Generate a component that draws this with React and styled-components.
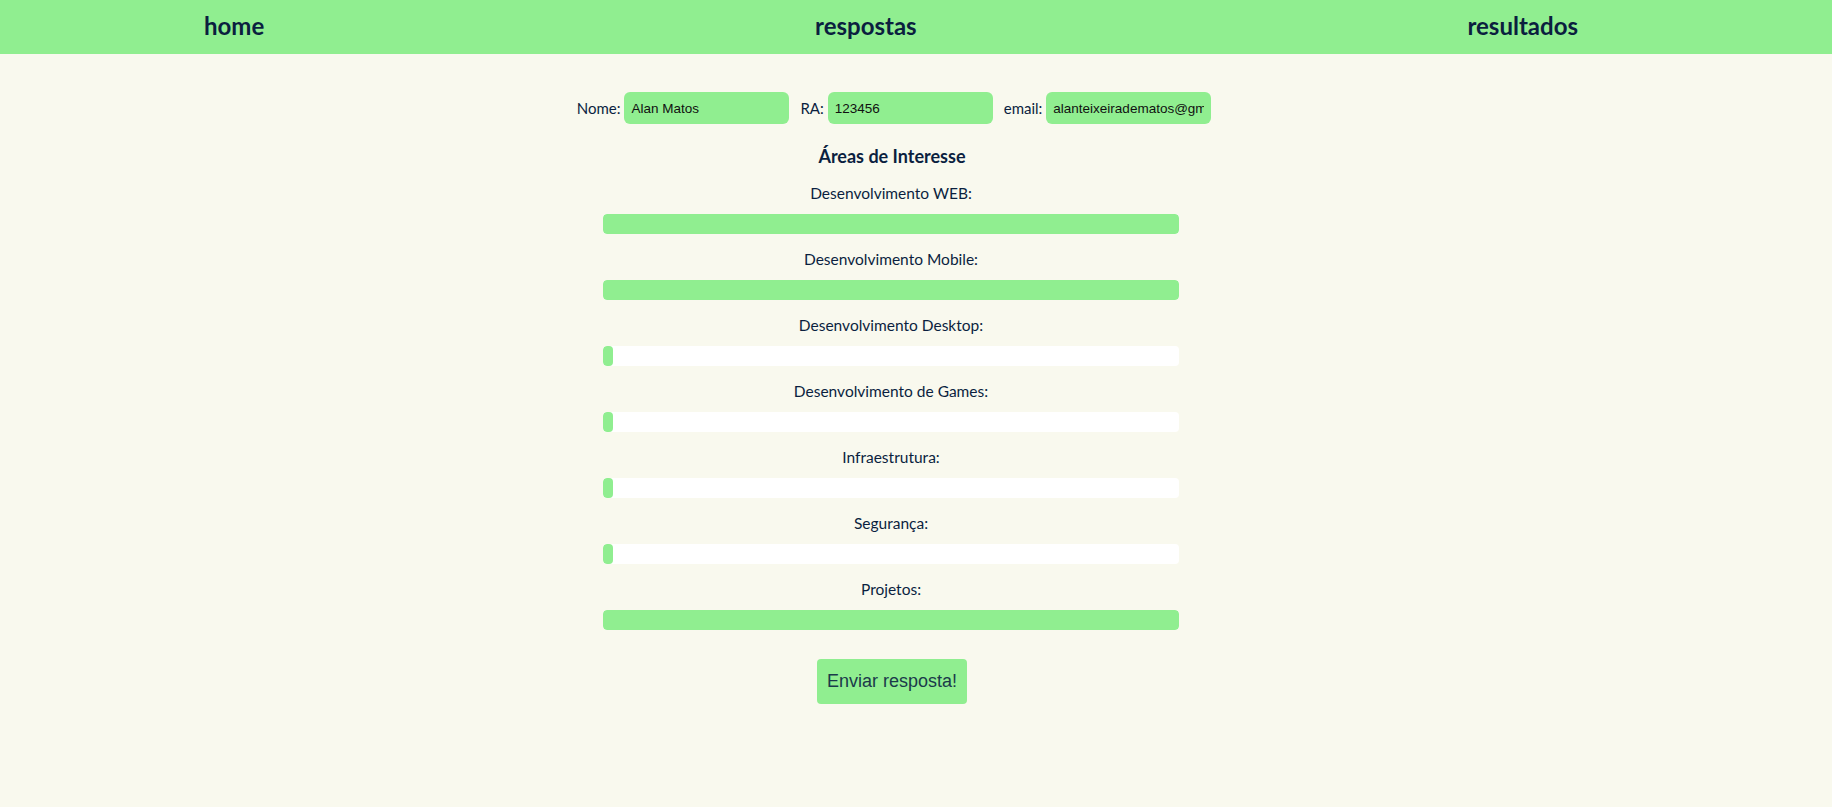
import React from "react";
import styled, { createGlobalStyle } from "styled-components";

const Global = createGlobalStyle`
  html, body { margin: 0; padding: 0; }
  body {
    background: #f9f9ee;
    font-family: Lato, "Open Sans", sans-serif;
    color: #0b1f3f;
  }
`;

const Header = styled.nav`
  height: 54px;
  background: #90ee90;
  display: flex;
  align-items: center;
  justify-content: space-between;
  padding: 0 254px 0 204px;
`;

const NavLink = styled.a`
  font-family: Lato, sans-serif;
  font-weight: 700;
  font-size: 24px;
  color: #0b1f3f;
  text-decoration: none;
  line-height: 1;
  margin-top: -3px;
`;

const Main = styled.main`
  display: flex;
  flex-direction: column;
  align-items: center;
  padding: 38px 48px 0 0;
`;

const FormRow = styled.div`
  display: flex;
  align-items: center;
  gap: 11px;
  margin-left: 4px;
`;

const Field = styled.label`
  display: flex;
  align-items: center;
  gap: 4px;
  font-size: 15px;
  color: #0b1f3f;
`;

const TextInput = styled.input`
  width: 165px;
  height: 32px;
  box-sizing: border-box;
  border: none;
  border-radius: 6px;
  background: #90ee90;
  padding: 0 7px;
  font-family: "Liberation Sans", Arial, sans-serif;
  font-size: 13.5px;
  color: #111;
  outline: none;
`;

const Title = styled.h2`
  margin: 21px 0 0;
  font-size: 18px;
  font-weight: 700;
  line-height: 22px;
  color: #0b1f3f;
`;

const Areas = styled.div`
  margin-top: 17px;
  display: flex;
  flex-direction: column;
  align-items: center;
  width: 576px;
  margin-right: 2px;
`;

const Area = styled.div`
  width: 100%;
  display: flex;
  flex-direction: column;
  align-items: center;
  padding-bottom: 16.5px;
`;

const AreaLabel = styled.span`
  font-size: 15.5px;
  line-height: 19px;
  color: #0b1f3f;
  margin-bottom: 10.5px;
`;

const Track = styled.div`
  width: 100%;
  height: 20px;
  background: #ffffff;
  border-radius: 4px;
  overflow: hidden;
  display: flex;
`;

const Fill = styled.div`
  height: 100%;
  min-width: 10px;
  background: #90ee90;
  border-radius: 4px;
`;

const SubmitButton = styled.button`
  margin-top: 13px;
  border: none;
  border-radius: 4px;
  background: #90ee90;
  padding: 12px 10px;
  font-family: "Liberation Sans", Arial, sans-serif;
  font-size: 18px;
  line-height: 21px;
  color: #1b3a4a;
  cursor: pointer;
`;

const areas = [
  { label: "Desenvolvimento WEB:", value: 100 },
  { label: "Desenvolvimento Mobile:", value: 100 },
  { label: "Desenvolvimento Desktop:", value: 0 },
  { label: "Desenvolvimento de Games:", value: 0 },
  { label: "Infraestrutura:", value: 0 },
  { label: "Segurança:", value: 0 },
  { label: "Projetos:", value: 100 },
];

export default function App() {
  return (
    <>
      <Global />
      <Header>
        <NavLink href="#">home</NavLink>
        <NavLink href="#">respostas</NavLink>
        <NavLink href="#">resultados</NavLink>
      </Header>
      <Main>
        <FormRow>
          <Field>
            Nome:
            <TextInput defaultValue="Alan Matos" />
          </Field>
          <Field>
            RA:
            <TextInput defaultValue="123456" />
          </Field>
          <Field>
            email:
            <TextInput defaultValue="alanteixeiradematos@gmail.com" />
          </Field>
        </FormRow>
        <Title>Áreas de Interesse</Title>
        <Areas>
          {areas.map((a) => (
            <Area key={a.label}>
              <AreaLabel>{a.label}</AreaLabel>
              <Track role="slider" aria-valuenow={a.value}>
                <Fill style={{ width: `${a.value}%` }} />
              </Track>
            </Area>
          ))}
        </Areas>
        <SubmitButton>Enviar resposta!</SubmitButton>
      </Main>
    </>
  );
}
